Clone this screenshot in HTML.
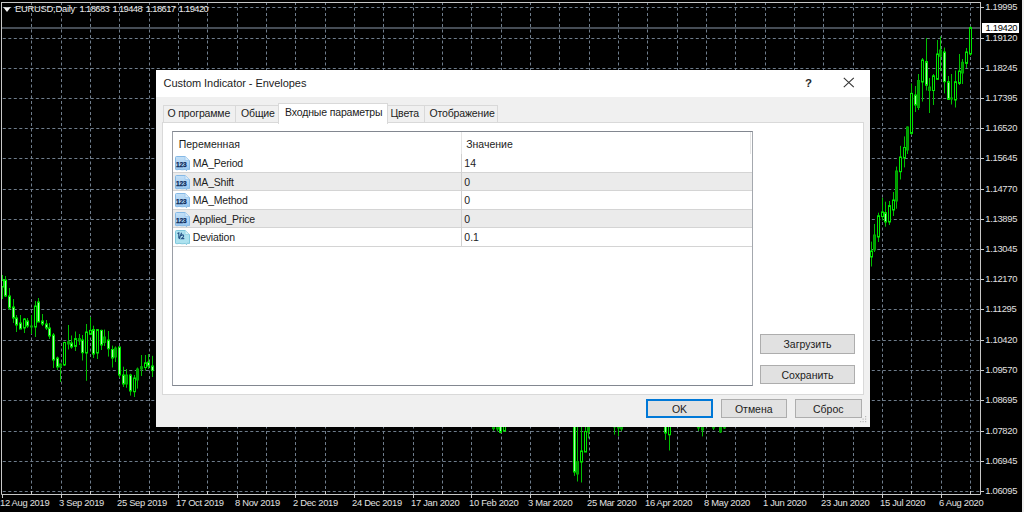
<!DOCTYPE html>
<html><head><meta charset="utf-8"><style>
*{margin:0;padding:0;box-sizing:border-box}
html,body{width:1024px;height:512px;overflow:hidden;background:#000}
body{position:relative;font-family:"Liberation Sans",sans-serif}
svg.chart{position:absolute;left:0;top:0}
.pl{position:absolute;left:985.3px;font-size:9.4px;line-height:12px;color:#e0e0e0;letter-spacing:-0.3px;white-space:nowrap}
.cur{position:absolute;left:982px;top:23px;width:37px;height:10px;background:#fff;color:#000;font-size:9.4px;line-height:10px;padding-left:3.5px;letter-spacing:-0.3px}
.dl{position:absolute;top:497px;font-size:9.4px;line-height:12px;color:#e0e0e0;white-space:nowrap;letter-spacing:-0.3px}
.hdr{position:absolute;left:15px;top:3px;font-size:9.4px;line-height:12px;color:#e8e8e8;white-space:nowrap;letter-spacing:-0.25px}
.dlg{position:absolute;left:156px;top:70px;width:714px;height:357px;background:#f0f0f0}
.dlg > *{position:absolute}
.ttl{left:0;top:0;width:714px;height:27px;background:#fff}
.tt{left:7.5px;top:7px;font-size:11px;line-height:12px;color:#1c1c1c;white-space:nowrap;letter-spacing:-0.05px}
.q{left:649px;top:7px;font-size:11.5px;font-weight:bold;color:#2a2a2a;line-height:12px}
.tab{top:35px;height:18px;background:#f0f0f0;border:1px solid #d9d9d9;border-bottom:none}
.tab.sel{top:33px;height:21px;background:#fff}
.tl{top:37.3px;font-size:10.5px;line-height:12px;color:#1c1c1c;white-space:nowrap;letter-spacing:-0.15px}
.panel{left:6px;top:52px;width:702px;height:273px;background:#fff;border:1px solid #d9d9d9}
.list{left:16px;top:61px;width:581px;height:255px;background:#fff;border:1px solid #828790;border-right-color:#a4a8ae;border-left-color:#9a9ea6}
.hd{font-size:10.5px;line-height:12px;color:#1c1c1c;white-space:nowrap;top:67.75px}
.row{left:17px;width:579px;border-bottom:1px solid #d4d4d4}
.rn{left:36.8px;font-size:10.5px;line-height:12px;color:#1c1c1c;white-space:nowrap;letter-spacing:-0.2px}
.rv{left:308.3px;font-size:10.5px;line-height:12px;color:#1c1c1c;white-space:nowrap}
.btn{background:#e1e1e1;border:1px solid #adadad;font-size:10.5px;color:#1c1c1c;text-align:center;white-space:nowrap}
</style></head><body>
<svg class="chart" width="1024" height="512" viewBox="0 0 1024 512"><g stroke="#6f7d8c" stroke-width="1" stroke-dasharray="3 2.5" fill="none"><line x1="2" y1="7.5" x2="980" y2="7.5" stroke-dashoffset="-0.8"/><line x1="2" y1="38.5" x2="980" y2="38.5" stroke-dashoffset="-0.8"/><line x1="2" y1="68.5" x2="980" y2="68.5" stroke-dashoffset="-0.8"/><line x1="2" y1="98.5" x2="980" y2="98.5" stroke-dashoffset="-0.8"/><line x1="2" y1="128.5" x2="980" y2="128.5" stroke-dashoffset="-0.8"/><line x1="2" y1="158.5" x2="980" y2="158.5" stroke-dashoffset="-0.8"/><line x1="2" y1="189.5" x2="980" y2="189.5" stroke-dashoffset="-0.8"/><line x1="2" y1="219.5" x2="980" y2="219.5" stroke-dashoffset="-0.8"/><line x1="2" y1="249.5" x2="980" y2="249.5" stroke-dashoffset="-0.8"/><line x1="2" y1="279.5" x2="980" y2="279.5" stroke-dashoffset="-0.8"/><line x1="2" y1="309.5" x2="980" y2="309.5" stroke-dashoffset="-0.8"/><line x1="2" y1="340.5" x2="980" y2="340.5" stroke-dashoffset="-0.8"/><line x1="2" y1="370.5" x2="980" y2="370.5" stroke-dashoffset="-0.8"/><line x1="2" y1="400.5" x2="980" y2="400.5" stroke-dashoffset="-0.8"/><line x1="2" y1="431.5" x2="980" y2="431.5" stroke-dashoffset="-0.8"/><line x1="2" y1="461.5" x2="980" y2="461.5" stroke-dashoffset="-0.8"/><line x1="2" y1="491.5" x2="980" y2="491.5" stroke-dashoffset="-0.8"/><line x1="31.5" y1="2" x2="31.5" y2="494"/><line x1="61.5" y1="2" x2="61.5" y2="494"/><line x1="90.5" y1="2" x2="90.5" y2="494"/><line x1="119.5" y1="2" x2="119.5" y2="494"/><line x1="149.5" y1="2" x2="149.5" y2="494"/><line x1="178.5" y1="2" x2="178.5" y2="494"/><line x1="207.5" y1="2" x2="207.5" y2="494"/><line x1="237.5" y1="2" x2="237.5" y2="494"/><line x1="266.5" y1="2" x2="266.5" y2="494"/><line x1="295.5" y1="2" x2="295.5" y2="494"/><line x1="325.5" y1="2" x2="325.5" y2="494"/><line x1="354.5" y1="2" x2="354.5" y2="494"/><line x1="383.5" y1="2" x2="383.5" y2="494"/><line x1="413.5" y1="2" x2="413.5" y2="494"/><line x1="442.5" y1="2" x2="442.5" y2="494"/><line x1="471.5" y1="2" x2="471.5" y2="494"/><line x1="501.5" y1="2" x2="501.5" y2="494"/><line x1="530.5" y1="2" x2="530.5" y2="494"/><line x1="559.5" y1="2" x2="559.5" y2="494"/><line x1="589.5" y1="2" x2="589.5" y2="494"/><line x1="618.5" y1="2" x2="618.5" y2="494"/><line x1="647.5" y1="2" x2="647.5" y2="494"/><line x1="677.5" y1="2" x2="677.5" y2="494"/><line x1="706.5" y1="2" x2="706.5" y2="494"/><line x1="735.5" y1="2" x2="735.5" y2="494"/><line x1="765.5" y1="2" x2="765.5" y2="494"/><line x1="794.5" y1="2" x2="794.5" y2="494"/><line x1="823.5" y1="2" x2="823.5" y2="494"/><line x1="853.5" y1="2" x2="853.5" y2="494"/><line x1="882.5" y1="2" x2="882.5" y2="494"/><line x1="911.5" y1="2" x2="911.5" y2="494"/><line x1="941.5" y1="2" x2="941.5" y2="494"/><line x1="970.5" y1="2" x2="970.5" y2="494"/></g><line x1="2" y1="28" x2="980" y2="28" stroke="#454c55" stroke-width="2"/><g><line x1="2.5" y1="275.0" x2="2.5" y2="299.0" stroke="#00c000" stroke-width="1"/><rect x="1.5" y="280.0" width="2" height="7.0" fill="#000" stroke="#00e600" stroke-width="1"/><line x1="5.5" y1="276.0" x2="5.5" y2="297.0" stroke="#00c000" stroke-width="1"/><rect x="4.5" y="280.0" width="2" height="16.0" fill="#b0f8b0" stroke="#00e600" stroke-width="1"/><line x1="9.5" y1="288.0" x2="9.5" y2="310.0" stroke="#00c000" stroke-width="1"/><rect x="8.5" y="296.0" width="2" height="12.0" fill="#b0f8b0" stroke="#00e600" stroke-width="1"/><line x1="13.5" y1="299.0" x2="13.5" y2="323.0" stroke="#00c000" stroke-width="1"/><rect x="12.5" y="307.0" width="2" height="11.0" fill="#b0f8b0" stroke="#00e600" stroke-width="1"/><line x1="16.5" y1="315.0" x2="16.5" y2="332.0" stroke="#00c000" stroke-width="1"/><rect x="15.5" y="318.0" width="2" height="7.0" fill="#b0f8b0" stroke="#00e600" stroke-width="1"/><line x1="20.5" y1="315.0" x2="20.5" y2="329.0" stroke="#00c000" stroke-width="1"/><rect x="19.5" y="323.0" width="2" height="6.0" fill="#b0f8b0" stroke="#00e600" stroke-width="1"/><line x1="24.5" y1="318.0" x2="24.5" y2="333.0" stroke="#00c000" stroke-width="1"/><rect x="23.5" y="319.0" width="2" height="9.0" fill="#000" stroke="#00e600" stroke-width="1"/><line x1="27.5" y1="318.0" x2="27.5" y2="328.0" stroke="#00c000" stroke-width="1"/><rect x="26.5" y="321.0" width="2" height="5.0" fill="#b0f8b0" stroke="#00e600" stroke-width="1"/><line x1="31.5" y1="315.0" x2="31.5" y2="334.0" stroke="#00c000" stroke-width="1"/><rect x="30.5" y="326.0" width="2" height="1.0" fill="#009a00" stroke="#00a800" stroke-width="1"/><line x1="35.5" y1="301.0" x2="35.5" y2="337.0" stroke="#00c000" stroke-width="1"/><rect x="34.5" y="306.0" width="2" height="21.0" fill="#000" stroke="#00e600" stroke-width="1"/><line x1="38.5" y1="298.0" x2="38.5" y2="322.0" stroke="#00c000" stroke-width="1"/><rect x="37.5" y="302.0" width="2" height="20.0" fill="#b0f8b0" stroke="#00e600" stroke-width="1"/><line x1="42.5" y1="314.0" x2="42.5" y2="326.0" stroke="#00c000" stroke-width="1"/><rect x="41.5" y="321.0" width="2" height="3.0" fill="#b0f8b0" stroke="#00e600" stroke-width="1"/><line x1="46.5" y1="320.0" x2="46.5" y2="330.0" stroke="#00c000" stroke-width="1"/><rect x="45.5" y="324.0" width="2" height="4.0" fill="#b0f8b0" stroke="#00e600" stroke-width="1"/><line x1="49.5" y1="323.0" x2="49.5" y2="339.0" stroke="#00c000" stroke-width="1"/><rect x="48.5" y="328.0" width="2" height="8.0" fill="#b0f8b0" stroke="#00e600" stroke-width="1"/><line x1="53.5" y1="333.0" x2="53.5" y2="368.0" stroke="#00c000" stroke-width="1"/><rect x="52.5" y="335.0" width="2" height="25.0" fill="#b0f8b0" stroke="#00e600" stroke-width="1"/><line x1="57.5" y1="356.5" x2="57.5" y2="370.0" stroke="#00c000" stroke-width="1"/><rect x="56.5" y="358.0" width="2" height="9.0" fill="#b0f8b0" stroke="#00e600" stroke-width="1"/><line x1="60.5" y1="363.6" x2="60.5" y2="382.0" stroke="#00c000" stroke-width="1"/><rect x="59.5" y="364.0" width="2" height="3.0" fill="#009a00" stroke="#00a800" stroke-width="1"/><line x1="64.5" y1="341.7" x2="64.5" y2="366.0" stroke="#00c000" stroke-width="1"/><rect x="63.5" y="342.5" width="2" height="22.5" fill="#000" stroke="#00e600" stroke-width="1"/><line x1="68.5" y1="325.0" x2="68.5" y2="349.5" stroke="#00c000" stroke-width="1"/><rect x="67.5" y="341.7" width="2" height="2.3000000000000114" fill="#009a00" stroke="#00a800" stroke-width="1"/><line x1="71.5" y1="335.5" x2="71.5" y2="348.75" stroke="#00c000" stroke-width="1"/><rect x="70.5" y="343.0" width="2" height="4.0" fill="#b0f8b0" stroke="#00e600" stroke-width="1"/><line x1="75.5" y1="331.5" x2="75.5" y2="351.0" stroke="#00c000" stroke-width="1"/><rect x="74.5" y="338.6" width="2" height="7.7999999999999545" fill="#000" stroke="#00e600" stroke-width="1"/><line x1="79.5" y1="334.0" x2="79.5" y2="345.0" stroke="#00c000" stroke-width="1"/><rect x="78.5" y="338.6" width="2" height="2.3999999999999773" fill="#009a00" stroke="#00a800" stroke-width="1"/><line x1="82.5" y1="335.0" x2="82.5" y2="360.5" stroke="#00c000" stroke-width="1"/><rect x="81.5" y="340.0" width="2" height="12.699999999999989" fill="#b0f8b0" stroke="#00e600" stroke-width="1"/><line x1="86.5" y1="324.0" x2="86.5" y2="380.8" stroke="#00c000" stroke-width="1"/><rect x="85.5" y="332.0" width="2" height="21.0" fill="#000" stroke="#00e600" stroke-width="1"/><line x1="90.5" y1="317.0" x2="90.5" y2="334.0" stroke="#00c000" stroke-width="1"/><rect x="89.5" y="330.4" width="2" height="3.900000000000034" fill="#000" stroke="#00e600" stroke-width="1"/><line x1="93.5" y1="325.7" x2="93.5" y2="358.0" stroke="#00c000" stroke-width="1"/><rect x="92.5" y="329.6" width="2" height="24.399999999999977" fill="#b0f8b0" stroke="#00e600" stroke-width="1"/><line x1="97.5" y1="329.0" x2="97.5" y2="359.0" stroke="#00c000" stroke-width="1"/><rect x="96.5" y="329.6" width="2" height="23.399999999999977" fill="#000" stroke="#00e600" stroke-width="1"/><line x1="101.5" y1="329.6" x2="101.5" y2="350.0" stroke="#00c000" stroke-width="1"/><rect x="100.5" y="330.4" width="2" height="14.600000000000023" fill="#b0f8b0" stroke="#00e600" stroke-width="1"/><line x1="104.5" y1="329.6" x2="104.5" y2="346.0" stroke="#00c000" stroke-width="1"/><rect x="103.5" y="337.0" width="2" height="5.5" fill="#009a00" stroke="#00a800" stroke-width="1"/><line x1="108.5" y1="331.0" x2="108.5" y2="356.6" stroke="#00c000" stroke-width="1"/><rect x="107.5" y="340.0" width="2" height="8.75" fill="#b0f8b0" stroke="#00e600" stroke-width="1"/><line x1="112.5" y1="345.6" x2="112.5" y2="367.5" stroke="#00c000" stroke-width="1"/><rect x="111.5" y="349.5" width="2" height="8.5" fill="#b0f8b0" stroke="#00e600" stroke-width="1"/><line x1="115.5" y1="346.4" x2="115.5" y2="362.0" stroke="#00c000" stroke-width="1"/><rect x="114.5" y="348.0" width="2" height="9.0" fill="#009a00" stroke="#00a800" stroke-width="1"/><line x1="119.5" y1="346.4" x2="119.5" y2="377.7" stroke="#00c000" stroke-width="1"/><rect x="118.5" y="347.0" width="2" height="28.0" fill="#b0f8b0" stroke="#00e600" stroke-width="1"/><line x1="123.5" y1="366.7" x2="123.5" y2="387.0" stroke="#00c000" stroke-width="1"/><rect x="122.5" y="375.0" width="2" height="9.0" fill="#b0f8b0" stroke="#00e600" stroke-width="1"/><line x1="126.5" y1="369.0" x2="126.5" y2="387.8" stroke="#00c000" stroke-width="1"/><rect x="125.5" y="375.0" width="2" height="9.0" fill="#009a00" stroke="#00a800" stroke-width="1"/><line x1="130.5" y1="373.75" x2="130.5" y2="395.6" stroke="#00c000" stroke-width="1"/><rect x="129.5" y="375.0" width="2" height="16.0" fill="#b0f8b0" stroke="#00e600" stroke-width="1"/><line x1="134.5" y1="375.0" x2="134.5" y2="397.0" stroke="#00c000" stroke-width="1"/><rect x="133.5" y="378.0" width="2" height="13.699999999999989" fill="#000" stroke="#00e600" stroke-width="1"/><line x1="137.5" y1="367.5" x2="137.5" y2="388.6" stroke="#00c000" stroke-width="1"/><rect x="136.5" y="369.0" width="2" height="11.0" fill="#009a00" stroke="#00a800" stroke-width="1"/><line x1="141.5" y1="355.0" x2="141.5" y2="376.0" stroke="#00c000" stroke-width="1"/><rect x="140.5" y="366.7" width="2" height="2.3000000000000114" fill="#009a00" stroke="#00a800" stroke-width="1"/><line x1="145.5" y1="355.0" x2="145.5" y2="370.6" stroke="#00c000" stroke-width="1"/><rect x="144.5" y="362.8" width="2" height="4.699999999999989" fill="#000" stroke="#00e600" stroke-width="1"/><line x1="148.5" y1="354.0" x2="148.5" y2="369.0" stroke="#00c000" stroke-width="1"/><rect x="147.5" y="362.0" width="2" height="4.0" fill="#b0f8b0" stroke="#00e600" stroke-width="1"/><line x1="152.5" y1="355.8" x2="152.5" y2="377.0" stroke="#00c000" stroke-width="1"/><rect x="151.5" y="366.0" width="2" height="4.600000000000023" fill="#b0f8b0" stroke="#00e600" stroke-width="1"/><line x1="493.5" y1="420.0" x2="493.5" y2="430.7" stroke="#00c000" stroke-width="1"/><rect x="492.5" y="420.0" width="2" height="8.699999999999989" fill="#009a00" stroke="#00a800" stroke-width="1"/><line x1="497.5" y1="420.0" x2="497.5" y2="431.3" stroke="#00c000" stroke-width="1"/><rect x="496.5" y="420.0" width="2" height="9.0" fill="#009a00" stroke="#00a800" stroke-width="1"/><line x1="500.5" y1="420.0" x2="500.5" y2="433.4" stroke="#00c000" stroke-width="1"/><rect x="499.5" y="420.0" width="2" height="12.399999999999977" fill="#b0f8b0" stroke="#00e600" stroke-width="1"/><line x1="504.5" y1="420.0" x2="504.5" y2="431.0" stroke="#00c000" stroke-width="1"/><rect x="503.5" y="420.0" width="2" height="11.0" fill="#000" stroke="#00e600" stroke-width="1"/><line x1="574.5" y1="420.0" x2="574.5" y2="475.9" stroke="#00c000" stroke-width="1"/><rect x="573.5" y="420.0" width="2" height="52.0" fill="#b0f8b0" stroke="#00e600" stroke-width="1"/><line x1="577.5" y1="420.0" x2="577.5" y2="481.5" stroke="#00c000" stroke-width="1"/><rect x="576.5" y="461.5" width="2" height="12.5" fill="#009a00" stroke="#00a800" stroke-width="1"/><line x1="581.5" y1="420.0" x2="581.5" y2="482.5" stroke="#00c000" stroke-width="1"/><rect x="580.5" y="451.0" width="2" height="11.0" fill="#000" stroke="#00e600" stroke-width="1"/><line x1="585.5" y1="420.0" x2="585.5" y2="452.0" stroke="#00c000" stroke-width="1"/><rect x="584.5" y="431.5" width="2" height="20.5" fill="#000" stroke="#00e600" stroke-width="1"/><line x1="588.5" y1="420.0" x2="588.5" y2="438.4" stroke="#00c000" stroke-width="1"/><rect x="587.5" y="420.0" width="2" height="12.0" fill="#009a00" stroke="#00a800" stroke-width="1"/><line x1="614.5" y1="420.0" x2="614.5" y2="434.6" stroke="#00c000" stroke-width="1"/><rect x="613.5" y="420.0" width="2" height="7.0" fill="#009a00" stroke="#00a800" stroke-width="1"/><line x1="618.5" y1="420.0" x2="618.5" y2="436.0" stroke="#00c000" stroke-width="1"/><rect x="617.5" y="420.0" width="2" height="8.0" fill="#009a00" stroke="#00a800" stroke-width="1"/><line x1="621.5" y1="420.0" x2="621.5" y2="431.0" stroke="#00c000" stroke-width="1"/><rect x="620.5" y="420.0" width="2" height="9.0" fill="#009a00" stroke="#00a800" stroke-width="1"/><line x1="665.5" y1="420.0" x2="665.5" y2="440.0" stroke="#00c000" stroke-width="1"/><rect x="664.5" y="420.0" width="2" height="13.0" fill="#b0f8b0" stroke="#00e600" stroke-width="1"/><line x1="669.5" y1="420.0" x2="669.5" y2="450.5" stroke="#00c000" stroke-width="1"/><rect x="668.5" y="420.0" width="2" height="14.800000000000011" fill="#000" stroke="#00e600" stroke-width="1"/><line x1="698.5" y1="420.0" x2="698.5" y2="431.0" stroke="#00c000" stroke-width="1"/><rect x="697.5" y="420.0" width="2" height="8.0" fill="#009a00" stroke="#00a800" stroke-width="1"/><line x1="702.5" y1="420.0" x2="702.5" y2="436.4" stroke="#00c000" stroke-width="1"/><rect x="701.5" y="420.0" width="2" height="10.0" fill="#009a00" stroke="#00a800" stroke-width="1"/><line x1="713.5" y1="420.0" x2="713.5" y2="430.0" stroke="#00c000" stroke-width="1"/><rect x="712.5" y="420.0" width="2" height="8.0" fill="#009a00" stroke="#00a800" stroke-width="1"/><line x1="720.5" y1="420.0" x2="720.5" y2="433.0" stroke="#00c000" stroke-width="1"/><rect x="719.5" y="420.0" width="2" height="12.0" fill="#009a00" stroke="#00a800" stroke-width="1"/><line x1="724.5" y1="420.0" x2="724.5" y2="429.0" stroke="#00c000" stroke-width="1"/><rect x="723.5" y="420.0" width="2" height="8.0" fill="#009a00" stroke="#00a800" stroke-width="1"/><line x1="871.5" y1="241.6" x2="871.5" y2="266.5" stroke="#00c000" stroke-width="1"/><rect x="870.5" y="251.0" width="2" height="6.0" fill="#000" stroke="#00e600" stroke-width="1"/><line x1="874.5" y1="224.0" x2="874.5" y2="252.0" stroke="#00c000" stroke-width="1"/><rect x="873.5" y="235.0" width="2" height="15.0" fill="#009a00" stroke="#00a800" stroke-width="1"/><line x1="878.5" y1="212.7" x2="878.5" y2="242.0" stroke="#00c000" stroke-width="1"/><rect x="877.5" y="215.8" width="2" height="21.19999999999999" fill="#000" stroke="#00e600" stroke-width="1"/><line x1="882.5" y1="197.8" x2="882.5" y2="220.5" stroke="#00c000" stroke-width="1"/><rect x="881.5" y="211.9" width="2" height="4.699999999999989" fill="#000" stroke="#00e600" stroke-width="1"/><line x1="885.5" y1="201.7" x2="885.5" y2="226.7" stroke="#00c000" stroke-width="1"/><rect x="884.5" y="212.7" width="2" height="9.300000000000011" fill="#b0f8b0" stroke="#00e600" stroke-width="1"/><line x1="889.5" y1="201.0" x2="889.5" y2="225.0" stroke="#00c000" stroke-width="1"/><rect x="888.5" y="205.6" width="2" height="16.400000000000006" fill="#000" stroke="#00e600" stroke-width="1"/><line x1="893.5" y1="192.0" x2="893.5" y2="216.0" stroke="#00c000" stroke-width="1"/><rect x="892.5" y="200.0" width="2" height="10.0" fill="#000" stroke="#00e600" stroke-width="1"/><line x1="896.5" y1="166.6" x2="896.5" y2="208.75" stroke="#00c000" stroke-width="1"/><rect x="895.5" y="171.0" width="2" height="30.0" fill="#009a00" stroke="#00a800" stroke-width="1"/><line x1="900.5" y1="145.8" x2="900.5" y2="179.5" stroke="#00c000" stroke-width="1"/><rect x="899.5" y="157.0" width="2" height="14.699999999999989" fill="#000" stroke="#00e600" stroke-width="1"/><line x1="904.5" y1="136.4" x2="904.5" y2="167.4" stroke="#00c000" stroke-width="1"/><rect x="903.5" y="147.5" width="2" height="10.5" fill="#000" stroke="#00e600" stroke-width="1"/><line x1="907.5" y1="126.4" x2="907.5" y2="154.0" stroke="#00c000" stroke-width="1"/><rect x="906.5" y="127.0" width="2" height="23.0" fill="#009a00" stroke="#00a800" stroke-width="1"/><line x1="911.5" y1="83.4" x2="911.5" y2="135.0" stroke="#00c000" stroke-width="1"/><rect x="910.5" y="93.4" width="2" height="40.0" fill="#000" stroke="#00e600" stroke-width="1"/><line x1="915.5" y1="86.0" x2="915.5" y2="112.0" stroke="#00c000" stroke-width="1"/><rect x="914.5" y="95.0" width="2" height="10.0" fill="#b0f8b0" stroke="#00e600" stroke-width="1"/><line x1="918.5" y1="74.0" x2="918.5" y2="110.0" stroke="#00c000" stroke-width="1"/><rect x="917.5" y="80.5" width="2" height="27.0" fill="#009a00" stroke="#00a800" stroke-width="1"/><line x1="922.5" y1="58.0" x2="922.5" y2="101.6" stroke="#00c000" stroke-width="1"/><rect x="921.5" y="60.0" width="2" height="22.0" fill="#000" stroke="#00e600" stroke-width="1"/><line x1="926.5" y1="38.0" x2="926.5" y2="90.5" stroke="#00c000" stroke-width="1"/><rect x="925.5" y="61.6" width="2" height="23.6" fill="#b0f8b0" stroke="#00e600" stroke-width="1"/><line x1="929.5" y1="78.0" x2="929.5" y2="113.0" stroke="#00c000" stroke-width="1"/><rect x="928.5" y="87.0" width="2" height="3.5" fill="#009a00" stroke="#00a800" stroke-width="1"/><line x1="933.5" y1="74.0" x2="933.5" y2="105.0" stroke="#00c000" stroke-width="1"/><rect x="932.5" y="75.8" width="2" height="14.700000000000003" fill="#000" stroke="#00e600" stroke-width="1"/><line x1="937.5" y1="40.0" x2="937.5" y2="80.0" stroke="#00c000" stroke-width="1"/><rect x="936.5" y="54.0" width="2" height="25.299999999999997" fill="#000" stroke="#00e600" stroke-width="1"/><line x1="940.5" y1="36.4" x2="940.5" y2="71.0" stroke="#00c000" stroke-width="1"/><rect x="939.5" y="50.0" width="2" height="6.299999999999997" fill="#009a00" stroke="#00a800" stroke-width="1"/><line x1="944.5" y1="47.5" x2="944.5" y2="93.4" stroke="#00c000" stroke-width="1"/><rect x="943.5" y="52.0" width="2" height="29.700000000000003" fill="#b0f8b0" stroke="#00e600" stroke-width="1"/><line x1="948.5" y1="76.0" x2="948.5" y2="100.0" stroke="#00c000" stroke-width="1"/><rect x="947.5" y="81.7" width="2" height="17.599999999999994" fill="#b0f8b0" stroke="#00e600" stroke-width="1"/><line x1="951.5" y1="74.0" x2="951.5" y2="104.5" stroke="#00c000" stroke-width="1"/><rect x="950.5" y="98.0" width="2" height="1.0" fill="#009a00" stroke="#00a800" stroke-width="1"/><line x1="955.5" y1="70.5" x2="955.5" y2="107.5" stroke="#00c000" stroke-width="1"/><rect x="954.5" y="81.7" width="2" height="18.299999999999997" fill="#000" stroke="#00e600" stroke-width="1"/><line x1="959.5" y1="54.0" x2="959.5" y2="85.0" stroke="#00c000" stroke-width="1"/><rect x="958.5" y="71.0" width="2" height="12.400000000000006" fill="#000" stroke="#00e600" stroke-width="1"/><line x1="962.5" y1="59.0" x2="962.5" y2="84.0" stroke="#00c000" stroke-width="1"/><rect x="961.5" y="62.3" width="2" height="10.700000000000003" fill="#009a00" stroke="#00a800" stroke-width="1"/><line x1="966.5" y1="48.0" x2="966.5" y2="68.0" stroke="#00c000" stroke-width="1"/><rect x="965.5" y="52.0" width="2" height="11.399999999999999" fill="#000" stroke="#00e600" stroke-width="1"/><line x1="970.5" y1="26.4" x2="970.5" y2="55.8" stroke="#00c000" stroke-width="1"/><rect x="969.5" y="27.6" width="2" height="26.4" fill="#000" stroke="#00e600" stroke-width="1"/></g><path d="M1.5 2 V494.5 H980.5 V2.5 H1.5" fill="none" stroke="#c8c8c8" stroke-width="1"/><line x1="1" y1="2.5" x2="981" y2="2.5" stroke="#c8c8c8"/><g stroke="#c8c8c8" stroke-width="1"><line x1="981" y1="7.5" x2="984" y2="7.5"/><line x1="981" y1="38.5" x2="984" y2="38.5"/><line x1="981" y1="68.5" x2="984" y2="68.5"/><line x1="981" y1="98.5" x2="984" y2="98.5"/><line x1="981" y1="128.5" x2="984" y2="128.5"/><line x1="981" y1="158.5" x2="984" y2="158.5"/><line x1="981" y1="189.5" x2="984" y2="189.5"/><line x1="981" y1="219.5" x2="984" y2="219.5"/><line x1="981" y1="249.5" x2="984" y2="249.5"/><line x1="981" y1="279.5" x2="984" y2="279.5"/><line x1="981" y1="309.5" x2="984" y2="309.5"/><line x1="981" y1="340.5" x2="984" y2="340.5"/><line x1="981" y1="370.5" x2="984" y2="370.5"/><line x1="981" y1="400.5" x2="984" y2="400.5"/><line x1="981" y1="431.5" x2="984" y2="431.5"/><line x1="981" y1="461.5" x2="984" y2="461.5"/><line x1="981" y1="491.5" x2="984" y2="491.5"/><line x1="2.5" y1="494" x2="2.5" y2="498"/><line x1="31.5" y1="491" x2="31.5" y2="494"/><line x1="61.5" y1="494" x2="61.5" y2="498"/><line x1="90.5" y1="491" x2="90.5" y2="494"/><line x1="119.5" y1="494" x2="119.5" y2="498"/><line x1="149.5" y1="491" x2="149.5" y2="494"/><line x1="178.5" y1="494" x2="178.5" y2="498"/><line x1="207.5" y1="491" x2="207.5" y2="494"/><line x1="237.5" y1="494" x2="237.5" y2="498"/><line x1="266.5" y1="491" x2="266.5" y2="494"/><line x1="295.5" y1="494" x2="295.5" y2="498"/><line x1="325.5" y1="491" x2="325.5" y2="494"/><line x1="354.5" y1="494" x2="354.5" y2="498"/><line x1="383.5" y1="491" x2="383.5" y2="494"/><line x1="413.5" y1="494" x2="413.5" y2="498"/><line x1="442.5" y1="491" x2="442.5" y2="494"/><line x1="471.5" y1="494" x2="471.5" y2="498"/><line x1="501.5" y1="491" x2="501.5" y2="494"/><line x1="530.5" y1="494" x2="530.5" y2="498"/><line x1="559.5" y1="491" x2="559.5" y2="494"/><line x1="589.5" y1="494" x2="589.5" y2="498"/><line x1="618.5" y1="491" x2="618.5" y2="494"/><line x1="647.5" y1="494" x2="647.5" y2="498"/><line x1="677.5" y1="491" x2="677.5" y2="494"/><line x1="706.5" y1="494" x2="706.5" y2="498"/><line x1="735.5" y1="491" x2="735.5" y2="494"/><line x1="765.5" y1="494" x2="765.5" y2="498"/><line x1="794.5" y1="491" x2="794.5" y2="494"/><line x1="823.5" y1="494" x2="823.5" y2="498"/><line x1="853.5" y1="491" x2="853.5" y2="494"/><line x1="882.5" y1="494" x2="882.5" y2="498"/><line x1="911.5" y1="491" x2="911.5" y2="494"/><line x1="941.5" y1="494" x2="941.5" y2="498"/><line x1="970.5" y1="491" x2="970.5" y2="494"/></g><rect x="1022" y="0" width="2" height="512" fill="#f0f0f0"/><path d="M3.3 7.3 L10.7 7.3 L7 12 Z" fill="#f4f4f4"/></svg>
<div class="pl" style="top:1px">1.19995</div><div class="pl" style="top:32px">1.19120</div><div class="pl" style="top:62px">1.18245</div><div class="pl" style="top:92px">1.17395</div><div class="pl" style="top:122px">1.16520</div><div class="pl" style="top:152px">1.15645</div><div class="pl" style="top:183px">1.14770</div><div class="pl" style="top:213px">1.13895</div><div class="pl" style="top:243px">1.13045</div><div class="pl" style="top:273px">1.12170</div><div class="pl" style="top:303px">1.11295</div><div class="pl" style="top:334px">1.10420</div><div class="pl" style="top:364px">1.09570</div><div class="pl" style="top:394px">1.08695</div><div class="pl" style="top:425px">1.07820</div><div class="pl" style="top:455px">1.06945</div><div class="pl" style="top:485px">1.06095</div><div class="cur">1.19420</div><div class="dl" style="left:0px">12 Aug 2019</div><div class="dl" style="left:59px">3 Sep 2019</div><div class="dl" style="left:117px">25 Sep 2019</div><div class="dl" style="left:176px">17 Oct 2019</div><div class="dl" style="left:235px">8 Nov 2019</div><div class="dl" style="left:293px">2 Dec 2019</div><div class="dl" style="left:352px">24 Dec 2019</div><div class="dl" style="left:411px">17 Jan 2020</div><div class="dl" style="left:469px">10 Feb 2020</div><div class="dl" style="left:528px">3 Mar 2020</div><div class="dl" style="left:587px">25 Mar 2020</div><div class="dl" style="left:645px">16 Apr 2020</div><div class="dl" style="left:704px">8 May 2020</div><div class="dl" style="left:763px">1 Jun 2020</div><div class="dl" style="left:821px">23 Jun 2020</div><div class="dl" style="left:880px">15 Jul 2020</div><div class="dl" style="left:939px">6 Aug 2020</div><div class="hdr" style="left:15px">EURUSD,Daily</div><div class="hdr" style="left:79.5px;letter-spacing:-0.6px">1.18683</div><div class="hdr" style="left:112.4px;letter-spacing:-0.6px">1.19448</div><div class="hdr" style="left:145.7px;letter-spacing:-0.6px">1.18617</div><div class="hdr" style="left:178.5px;letter-spacing:-0.6px">1.19420</div>
<div class="dlg">
 <div class="ttl"></div>
 <span class="tt">Custom Indicator - Envelopes</span><span class="q">?</span>
 <svg style="position:absolute;left:687px;top:7px" width="12" height="11" viewBox="0 0 12 11"><path d="M0.8 0.8 L10.8 10.2 M10.8 0.8 L0.8 10.2" stroke="#333" stroke-width="1.1" fill="none"/></svg>
 <div class="tab" style="left:7px;width:73px"></div><span class="tl" style="left:11.5px">О программе</span>
 <div class="tab" style="left:79px;width:44px"></div><span class="tl" style="left:85px">Общие</span>
 <div class="tab" style="left:231px;width:38px"></div><span class="tl" style="left:234.5px">Цвета</span>
 <div class="tab" style="left:268px;width:74px"></div><span class="tl" style="left:273.5px">Отображение</span>
 <div class="panel"></div>
 <div class="tab sel" style="left:122px;width:110px"></div><span class="tl" style="left:129px;top:36.2px">Входные параметры</span>
 <div class="list"></div>
 <div style="position:absolute;left:305px;top:62px;width:1px;height:22px;background:#e5e5e5"></div>
 <div style="position:absolute;left:594px;top:62px;width:1px;height:22px;background:#e5e5e5"></div>
 <span class="hd" style="left:22.7px">Переменная</span><span class="hd" style="left:310.2px">Значение</span>
 <div class="row" style="top:84px;height:19px;background:#ffffff"></div><div class="row" style="top:103px;height:18px;background:#ebebeb"></div><div class="row" style="top:121px;height:19px;background:#ffffff"></div><div class="row" style="top:140px;height:18px;background:#ebebeb"></div><div class="row" style="top:158px;height:19px;background:#ffffff"></div><svg class="ic" style="left:19px;top:86px" width="16" height="16" viewBox="0 0 16 16"><defs><linearGradient id="gb" x1="0" y1="0" x2="0" y2="1"><stop offset="0" stop-color="#c4e0f7"/><stop offset="1" stop-color="#98c6ee"/></linearGradient></defs><path d="M0.5 1.5 Q0.5 0.5 1.5 0.5 H10 L14.5 4.5 V13.5 L12 13.2 L11.5 14.8 L10.5 13.5 L7 13.8 L4 13.3 L2 13.8 L0.5 13.3 Z" fill="url(#gb)" stroke="#85b9e6" stroke-width="1"/><path d="M10 0.5 V4.5 H14.5" fill="#d6eafa" stroke="#9cc8ee" stroke-width="0.8"/><text x="6.3" y="11.2" font-family="Liberation Sans" font-size="6.6" font-weight="bold" fill="#0e2a5a" stroke="#0e2a5a" stroke-width="0.25" text-anchor="middle" letter-spacing="-0.2">123</text></svg><span class="rn" style="top:87px">MA_Period</span><span class="rv" style="top:87px">14</span><svg class="ic" style="left:19px;top:105px" width="16" height="16" viewBox="0 0 16 16"><defs><linearGradient id="gb" x1="0" y1="0" x2="0" y2="1"><stop offset="0" stop-color="#c4e0f7"/><stop offset="1" stop-color="#98c6ee"/></linearGradient></defs><path d="M0.5 1.5 Q0.5 0.5 1.5 0.5 H10 L14.5 4.5 V13.5 L12 13.2 L11.5 14.8 L10.5 13.5 L7 13.8 L4 13.3 L2 13.8 L0.5 13.3 Z" fill="url(#gb)" stroke="#85b9e6" stroke-width="1"/><path d="M10 0.5 V4.5 H14.5" fill="#d6eafa" stroke="#9cc8ee" stroke-width="0.8"/><text x="6.3" y="11.2" font-family="Liberation Sans" font-size="6.6" font-weight="bold" fill="#0e2a5a" stroke="#0e2a5a" stroke-width="0.25" text-anchor="middle" letter-spacing="-0.2">123</text></svg><span class="rn" style="top:106px">MA_Shift</span><span class="rv" style="top:106px">0</span><svg class="ic" style="left:19px;top:123px" width="16" height="16" viewBox="0 0 16 16"><defs><linearGradient id="gb" x1="0" y1="0" x2="0" y2="1"><stop offset="0" stop-color="#c4e0f7"/><stop offset="1" stop-color="#98c6ee"/></linearGradient></defs><path d="M0.5 1.5 Q0.5 0.5 1.5 0.5 H10 L14.5 4.5 V13.5 L12 13.2 L11.5 14.8 L10.5 13.5 L7 13.8 L4 13.3 L2 13.8 L0.5 13.3 Z" fill="url(#gb)" stroke="#85b9e6" stroke-width="1"/><path d="M10 0.5 V4.5 H14.5" fill="#d6eafa" stroke="#9cc8ee" stroke-width="0.8"/><text x="6.3" y="11.2" font-family="Liberation Sans" font-size="6.6" font-weight="bold" fill="#0e2a5a" stroke="#0e2a5a" stroke-width="0.25" text-anchor="middle" letter-spacing="-0.2">123</text></svg><span class="rn" style="top:124px">MA_Method</span><span class="rv" style="top:124px">0</span><svg class="ic" style="left:19px;top:142px" width="16" height="16" viewBox="0 0 16 16"><defs><linearGradient id="gb" x1="0" y1="0" x2="0" y2="1"><stop offset="0" stop-color="#c4e0f7"/><stop offset="1" stop-color="#98c6ee"/></linearGradient></defs><path d="M0.5 1.5 Q0.5 0.5 1.5 0.5 H10 L14.5 4.5 V13.5 L12 13.2 L11.5 14.8 L10.5 13.5 L7 13.8 L4 13.3 L2 13.8 L0.5 13.3 Z" fill="url(#gb)" stroke="#85b9e6" stroke-width="1"/><path d="M10 0.5 V4.5 H14.5" fill="#d6eafa" stroke="#9cc8ee" stroke-width="0.8"/><text x="6.3" y="11.2" font-family="Liberation Sans" font-size="6.6" font-weight="bold" fill="#0e2a5a" stroke="#0e2a5a" stroke-width="0.25" text-anchor="middle" letter-spacing="-0.2">123</text></svg><span class="rn" style="top:143px">Applied_Price</span><span class="rv" style="top:143px">0</span><svg class="ic" style="left:19px;top:160px" width="16" height="16" viewBox="0 0 16 16"><path d="M0.5 1.5 Q0.5 0.5 1.5 0.5 H10 L14.5 4.5 V13.5 L12 13.2 L11.5 14.8 L10.5 13.5 L7 13.8 L4 13.3 L2 13.8 L0.5 13.3 Z" fill="#ade2ef" stroke="#7fc8dc" stroke-width="1"/><path d="M10 0.5 V4.5 H14.5" fill="#d8f1f7" stroke="#8fd0e2" stroke-width="0.8"/><path d="M2.4 3.6 L3.8 2.9 V8.2 M4.2 9 L6.6 2.8 M6.3 5.6 Q7.2 4.6 8.3 5.1 Q9.1 5.8 8.1 7.1 L6.5 8.6 H9.3" fill="none" stroke="#2a5688" stroke-width="1.15"/></svg><span class="rn" style="top:161px">Deviation</span><span class="rv" style="top:161px">0.1</span><div style="left:305px;top:84px;width:1px;height:92px;background:#d0d0d0"></div>
 <div class="btn" style="left:604px;top:264px;width:95px;height:20px;line-height:18px">Загрузить</div>
 <div class="btn" style="left:604px;top:294.5px;width:95px;height:19.5px;line-height:18px">Сохранить</div>
 <div class="btn" style="left:490px;top:329px;width:67px;height:19px;line-height:17px;border:2px solid #0078d7">OK</div>
 <div class="btn" style="left:564.5px;top:329px;width:66.5px;height:19px;line-height:18.5px">Отмена</div>
 <div class="btn" style="left:639px;top:329px;width:66.5px;height:19px;line-height:18.5px">Сброс</div>
 <svg style="position:absolute;left:704px;top:346px" width="8" height="8" viewBox="0 0 8 8"><g fill="#b8b8b8"><rect x="5" y="0" width="1.2" height="1.2"/><rect x="2.5" y="2.5" width="1.2" height="1.2"/><rect x="5" y="2.5" width="1.2" height="1.2"/><rect x="0" y="5" width="1.2" height="1.2"/><rect x="2.5" y="5" width="1.2" height="1.2"/><rect x="5" y="5" width="1.2" height="1.2"/></g></svg>
</div>
</body></html>
